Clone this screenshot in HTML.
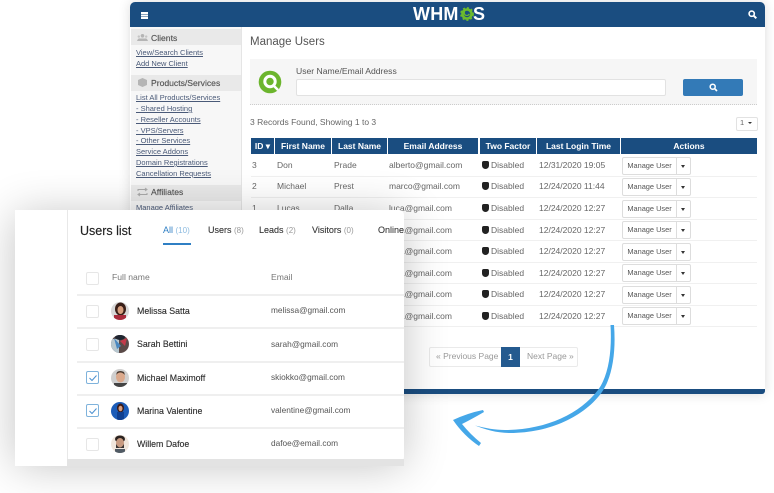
<!DOCTYPE html>
<html><head><meta charset="utf-8"><style>
html,body{margin:0;padding:0;background:#fff}
body{width:774px;height:493px;position:relative;overflow:hidden;font-family:"Liberation Sans",sans-serif;color:#555}
div,span,a{position:absolute;white-space:nowrap}
svg{position:absolute;overflow:visible}
.l{font-size:7.5px;color:#4a5a78;text-decoration:underline;left:136px;line-height:10px}
.sh{left:131px;width:110px;background:#e9e9e9;height:16px}
.st{left:151px;font-size:8.6px;color:#555;line-height:12px;-webkit-text-stroke:.15px #555}
.th{top:138px;height:16px;background:#1a4d80;color:#fff;font-size:8.5px;font-weight:bold;text-align:center;line-height:16px}
.c{font-size:8.5px;color:#666;line-height:11px}
.ln{left:251px;width:506px;height:1px;background:#f0f0f0}
.mb{left:622px;width:67px;height:16px;border:1px solid #ddd;border-radius:2px;background:#fff;box-sizing:content-box}
.mb b{position:absolute;left:0;top:0;width:53px;height:16px;border-right:1px solid #ddd;font-weight:normal;font-size:7.4px;color:#555;text-align:center;line-height:16px}
.mb i{position:absolute;left:58px;top:7px;border:2.5px solid transparent;border-top:3px solid #333;border-bottom:0}
.sd{width:7.5px;height:8px;left:481.5px;background:#222;border-radius:2px 2px 4px 4px}
.hl{left:77px;width:327px;height:2px;background:#efefef}
.cb{left:86px;width:10.5px;height:10.5px;border:1.5px solid #e6e6e6;border-radius:2px;background:#fff}
.cb.on{border-color:#7fb3dc}
.nm{left:137px;font-size:8.8px;color:#2b2b2b;line-height:12px;-webkit-text-stroke:.12px #2b2b2b}
.em{left:271px;font-size:8.3px;color:#555;line-height:11px}
.tab{top:225px;font-size:9px;color:#333;line-height:11px;-webkit-text-stroke:.1px #333}
.tab u{text-decoration:none;color:#999;font-size:8px;-webkit-text-stroke:0}
</style></head><body>
<!-- main window -->
<div style="left:130px;top:2px;width:635px;height:392px;background:#fff;border-radius:5px 5px 3px 3px;box-shadow:0 0 12px rgba(0,0,0,.14)"></div>
<div style="left:130px;top:2px;width:635px;height:25px;background:#1a4d80;border-radius:5px 5px 0 0"></div>
<div style="left:141px;top:12px;width:7px;height:1.5px;background:#fff;box-shadow:0 2.500px 0 #fff,0 5px 0 #fff"></div>
<div style="left:413px;top:4px;font-size:18px;font-weight:bold;color:#fff;line-height:20px;letter-spacing:.2px">WHM</div>
<svg style="left:460px;top:7px" width="14" height="14" viewBox="0 0 14 14"><circle cx="7" cy="7" r="4.500" fill="none" stroke="#6cbb2c" stroke-width="2.600"/><circle cx="7" cy="7" r="6" fill="none" stroke="#6cbb2c" stroke-width="1.800" stroke-dasharray="2 2"/></svg>
<div style="left:463px;top:7px;font-size:10px;font-weight:bold;color:#6cbb2c;line-height:14px">C</div>
<div style="left:473px;top:4px;font-size:18px;font-weight:bold;color:#fff;line-height:20px">S</div>
<svg style="left:748px;top:10px" width="9" height="9" viewBox="0 0 9 9"><circle cx="3.700" cy="3.700" r="2.600" fill="none" stroke="#fff" stroke-width="1.600"/><path d="M5.700 5.700L8.300 8.300" stroke="#fff" stroke-width="2"/></svg>
<div style="left:130px;top:389px;width:635px;height:5px;background:#1a4d80;border-radius:0 0 3px 3px"></div>

<!-- sidebar -->
<div style="left:131px;top:27px;width:110px;height:200px;background:#f7f7f7;border-right:1px solid #e5e5e5"></div>
<div class="sh" style="top:29px"></div><div class="st" style="top:32px">Clients</div>
<svg style="left:137px;top:34px" width="11" height="7" viewBox="0 0 11 7"><circle cx="5.500" cy="1.800" r="1.800" fill="#b5b5b5"/><circle cx="1.800" cy="2.600" r="1.200" fill="#c5c5c5"/><circle cx="9.200" cy="2.600" r="1.200" fill="#c5c5c5"/><path d="M0 7Q1 4 3 4.500H8Q10 4 11 7Z" fill="#b5b5b5"/></svg>
<div class="sh" style="top:75px"></div><div class="st" style="top:77px">Products/Services</div>
<svg style="left:138px;top:78px" width="9" height="9" viewBox="0 0 9 9"><path d="M4.500 0L9 2V7L4.500 9 0 7V2Z" fill="#b5b5b5"/></svg>
<a class="l" style="top:48px">View/Search Clients</a>
<a class="l" style="top:59px">Add New Client</a>
<a class="l" style="top:93px">List All Products/Services</a>
<a class="l" style="top:104px">- Shared Hosting</a>
<a class="l" style="top:115px">- Reseller Accounts</a>
<a class="l" style="top:126px">- VPS/Servers</a>
<a class="l" style="top:136px">- Other Services</a>
<a class="l" style="top:147px">Service Addons</a>
<a class="l" style="top:158px">Domain Registrations</a>
<a class="l" style="top:169px">Cancellation Requests</a>
<div class="sh" style="top:185px"></div><div class="st" style="top:186px">Affiliates</div>
<svg style="left:137px;top:188px" width="11" height="8" viewBox="0 0 11 8"><path d="M1 3V1.500H9M8 0L10 1.500 8 3M10 5V6.500H2M3 5L1 6.500 3 8" fill="none" stroke="#aaa" stroke-width="1"/></svg>
<a class="l" style="top:203px;text-decoration:none">Manage Affiliates</a>

<!-- content -->
<div style="left:250px;top:35px;font-size:11.5px;color:#555;line-height:15px">Manage Users</div>
<div style="left:250px;top:59px;width:507px;height:45px;background:#f6f6f6;border-bottom:1px dotted #ccc"></div>
<svg style="left:258px;top:70px" width="24" height="24" viewBox="0 0 24 24"><circle cx="12" cy="12" r="11.300" fill="#6cb52d"/><circle cx="12" cy="11.500" r="5.200" fill="none" stroke="#fff" stroke-width="3"/><path d="M15 15L20 20" stroke="#fff" stroke-width="2.500"/></svg>
<div style="left:296px;top:65px;font-size:8.6px;color:#555;line-height:12px">User Name/Email Address</div>
<div style="left:296px;top:79px;width:368px;height:15px;background:#fff;border:1px solid #e2e2e2;border-radius:2px"></div>
<div style="left:683px;top:79px;width:60px;height:17px;background:#337ab7;border-radius:2px"></div>
<svg style="left:709px;top:83px" width="9" height="9" viewBox="0 0 9 9"><circle cx="3.700" cy="3.700" r="2.500" fill="none" stroke="#fff" stroke-width="1.500"/><path d="M5.700 5.700L8 8" stroke="#fff" stroke-width="1.700"/></svg>
<div style="left:250px;top:117px;font-size:8.5px;color:#666;line-height:11px">3 Records Found, Showing 1 to 3</div>
<div style="left:736px;top:117px;width:20px;height:12px;border:1px solid #e2e2e2;border-radius:2px;background:#fff"></div>
<div style="left:740px;top:118px;font-size:7.5px;color:#666;line-height:10px">1</div>
<div style="left:748px;top:122px;border:2px solid transparent;border-top:2.500px solid #333;border-bottom:0"></div>

<div class="th" style="left:251px;width:23px">ID ▾</div>
<div class="th" style="left:275px;width:56px">First Name</div>
<div class="th" style="left:332px;width:55px">Last Name</div>
<div class="th" style="left:388px;width:90px">Email Address</div>
<div class="th" style="left:480px;width:56px">Two Factor</div>
<div class="th" style="left:537px;width:83px">Last Login Time</div>
<div class="th" style="left:621px;width:136px">Actions</div>

<div class="ln" style="top:176px"></div><div class="ln" style="top:197px"></div><div class="ln" style="top:219px"></div><div class="ln" style="top:240px"></div><div class="ln" style="top:262px"></div><div class="ln" style="top:283px"></div><div class="ln" style="top:305px"></div><div class="ln" style="top:326px"></div>

<div class="c" style="left:252px;top:160px">3</div><div class="c" style="left:277px;top:160px">Don</div><div class="c" style="left:334px;top:160px">Prade</div><div class="c" style="left:389px;top:160px">alberto@gmail.com</div>
<div class="c" style="left:252px;top:181px">2</div><div class="c" style="left:277px;top:181px">Michael</div><div class="c" style="left:334px;top:181px">Prest</div><div class="c" style="left:389px;top:181px">marco@gmail.com</div>
<div class="c" style="left:252px;top:203px">1</div><div class="c" style="left:277px;top:203px">Lucas</div><div class="c" style="left:334px;top:203px">Dalla</div><div class="c" style="left:389px;top:203px">luca@gmail.com</div>
<div class="c" style="left:389px;top:246px">luca@gmail.com</div><div class="c" style="left:389px;top:225px">luca@gmail.com</div>
<div class="c" style="left:389px;top:268px">luca@gmail.com</div><div class="c" style="left:389px;top:289px">luca@gmail.com</div><div class="c" style="left:389px;top:311px">luca@gmail.com</div>

<div class="sd" style="top:161px"></div><div class="c" style="left:491px;top:160px">Disabled</div><div class="c" style="left:539px;top:160px">12/31/2020 19:05</div><div class="mb" style="top:157px"><b>Manage User</b><i></i></div>
<div class="sd" style="top:182px"></div><div class="c" style="left:491px;top:181px">Disabled</div><div class="c" style="left:539px;top:181px">12/24/2020 11:44</div><div class="mb" style="top:178px"><b>Manage User</b><i></i></div>
<div class="sd" style="top:204px"></div><div class="c" style="left:491px;top:203px">Disabled</div><div class="c" style="left:539px;top:203px">12/24/2020 12:27</div><div class="mb" style="top:200px"><b>Manage User</b><i></i></div>
<div class="sd" style="top:226px"></div><div class="c" style="left:491px;top:225px">Disabled</div><div class="c" style="left:539px;top:225px">12/24/2020 12:27</div><div class="mb" style="top:221px"><b>Manage User</b><i></i></div>
<div class="sd" style="top:247px"></div><div class="c" style="left:491px;top:246px">Disabled</div><div class="c" style="left:539px;top:246px">12/24/2020 12:27</div><div class="mb" style="top:243px"><b>Manage User</b><i></i></div>
<div class="sd" style="top:269px"></div><div class="c" style="left:491px;top:268px">Disabled</div><div class="c" style="left:539px;top:268px">12/24/2020 12:27</div><div class="mb" style="top:264px"><b>Manage User</b><i></i></div>
<div class="sd" style="top:290px"></div><div class="c" style="left:491px;top:289px">Disabled</div><div class="c" style="left:539px;top:289px">12/24/2020 12:27</div><div class="mb" style="top:286px"><b>Manage User</b><i></i></div>
<div class="sd" style="top:312px"></div><div class="c" style="left:491px;top:311px">Disabled</div><div class="c" style="left:539px;top:311px">12/24/2020 12:27</div><div class="mb" style="top:307px"><b>Manage User</b><i></i></div>

<!-- pagination -->
<div style="left:429px;top:347px;width:147px;height:18px;border:1px solid #eaeaea;border-radius:2px;background:#fff"></div>
<div style="left:436px;top:351px;font-size:8.5px;color:#999;line-height:11px">« Previous Page</div>
<div style="left:501px;top:347px;width:19px;height:20px;background:#245a8f;color:#fff;font-size:8.5px;font-weight:bold;text-align:center;line-height:20px">1</div>
<div style="left:527px;top:351px;font-size:8.5px;color:#999;line-height:11px">Next Page »</div>

<!-- users card -->
<div style="left:15px;top:210px;width:389px;height:252px;box-shadow:0 4px 44px rgba(0,0,0,.24);border-radius:0 5px 5px 0"></div>
<div style="left:15px;top:210px;width:53px;height:256px;background:#fff"></div>
<div style="left:67px;top:459px;width:337px;height:7px;background:#e3e3e3"></div>
<div style="left:67px;top:210px;width:337px;height:249px;background:#fff;border-left:1.500px solid #e8e8e8;box-sizing:border-box;border-radius:0 5px 5px 0"></div>

<div style="left:80px;top:223px;font-size:12.5px;color:#222;line-height:17px;-webkit-text-stroke:.15px #222">Users list</div>
<div class="tab" style="left:163px;color:#2f7fc4;-webkit-text-stroke:0">All <u style="color:#8dbbe0">(10)</u></div>
<div style="left:163px;top:243px;width:28px;height:1.500px;background:#2f7fc4"></div>
<div class="tab" style="left:208px">Users <u>(8)</u></div>
<div class="tab" style="left:259px">Leads <u>(2)</u></div>
<div class="tab" style="left:312px">Visitors <u>(0)</u></div>
<div class="tab" style="left:378px;width:26px;overflow:hidden">Online</div>

<div class="cb" style="top:272px"></div>
<div style="left:112px;top:272px;font-size:8.6px;color:#777;line-height:11px">Full name</div>
<div style="left:271px;top:272px;font-size:8.6px;color:#777;line-height:11px">Email</div>
<div class="hl" style="top:294px"></div><div class="hl" style="top:327px"></div><div class="hl" style="top:361px"></div><div class="hl" style="top:394px"></div><div class="hl" style="top:427px"></div>

<div class="cb" style="top:305px"></div>
<div class="cb" style="top:338px"></div>
<div class="cb on" style="top:371px"></div>
<div class="cb on" style="top:404px"></div>
<div class="cb" style="top:438px"></div>
<svg style="left:88px;top:374px" width="10" height="8" viewBox="0 0 10 8"><path d="M1.500 4L4 6.500 8.500 1.500" fill="none" stroke="#4a90d0" stroke-width="1"/></svg>
<svg style="left:88px;top:407px" width="10" height="8" viewBox="0 0 10 8"><path d="M1.500 4L4 6.500 8.500 1.500" fill="none" stroke="#4a90d0" stroke-width="1"/></svg>

<svg style="left:111px;top:302px" width="18" height="18" viewBox="0 0 18 18"><defs><clipPath id="k"><circle cx="9" cy="9" r="9"/></clipPath></defs><g clip-path="url(#k)"><rect width="18" height="18" fill="#d8d8d8"/><ellipse cx="9.500" cy="7" rx="5.500" ry="6.500" fill="#3a2018"/><ellipse cx="9.500" cy="8" rx="3" ry="4" fill="#d8a080"/><rect x="3" y="13" width="12" height="5" fill="#a92c3c"/></g></svg>
<svg style="left:111px;top:335px" width="18" height="18" viewBox="0 0 18 18"><g clip-path="url(#k)"><rect width="18" height="18" fill="#5a4a48"/><rect x="0" y="4" width="8" height="14" fill="#b8c8d0"/><path d="M3 3L10 11 6 14Z" fill="#4a88c0"/><path d="M9 6L16 3 14 11Z" fill="#c23a4a"/><ellipse cx="9" cy="2" rx="5" ry="3" fill="#1f2530"/></g></svg>
<svg style="left:111px;top:369px" width="18" height="18" viewBox="0 0 18 18"><g clip-path="url(#k)"><rect width="18" height="18" fill="#cfcfcf"/><ellipse cx="9.500" cy="8" rx="4.500" ry="5.500" fill="#dba98c"/><path d="M5 6Q9 1 14 6L13 3Q9 1 6 3Z" fill="#4a3a30"/><rect x="3" y="14" width="13" height="4" fill="#444"/></g></svg>
<svg style="left:111px;top:402px" width="18" height="18" viewBox="0 0 18 18"><g clip-path="url(#k)"><rect width="18" height="18" fill="#1c5cb8"/><ellipse cx="9.500" cy="6" rx="3.500" ry="4.500" fill="#3a1a18"/><ellipse cx="9.500" cy="6.500" rx="2" ry="2.800" fill="#d8a080"/><rect x="6" y="10" width="7" height="8" fill="#0f3f90"/></g></svg>
<svg style="left:111px;top:435px" width="18" height="18" viewBox="0 0 18 18"><g clip-path="url(#k)"><rect width="18" height="18" fill="#f0e6dc"/><ellipse cx="9" cy="4" rx="5" ry="3.500" fill="#2a2220"/><ellipse cx="9" cy="8" rx="4" ry="5" fill="#c89a80"/><path d="M5 9Q9 16 13 9V13H5Z" fill="#3a3432"/><rect x="4" y="14" width="10" height="4" fill="#505a64"/></g></svg>

<div class="nm" style="top:305px">Melissa Satta</div><div class="em" style="top:305px">melissa@gmail.com</div>
<div class="nm" style="top:338px">Sarah Bettini</div><div class="em" style="top:339px">sarah@gmail.com</div>
<div class="nm" style="top:372px">Michael Maximoff</div><div class="em" style="top:372px">skiokko@gmail.com</div>
<div class="nm" style="top:405px">Marina Valentine</div><div class="em" style="top:405px">valentine@gmail.com</div>
<div class="nm" style="top:438px">Willem Dafoe</div><div class="em" style="top:438px">dafoe@email.com</div>

<!-- arrow -->
<svg style="left:0;top:0" width="774" height="493" viewBox="0 0 774 493">
<path d="M610.500 325C612 350 609 375 598 390C580 414 545 430 505 430C495 430 485 428 475 425.500C485 429.500 497 433 510 433C550 433 585 416 602 392C613 376 616 350 614 325Z" fill="#45a7e8"/>
<path d="M453 420Q468 413 483 410L484 412Q472 419 462 424Q470 434 481 443L479 446Q464 436 453 420Z" fill="#45a7e8"/>
</svg>
</body></html>
